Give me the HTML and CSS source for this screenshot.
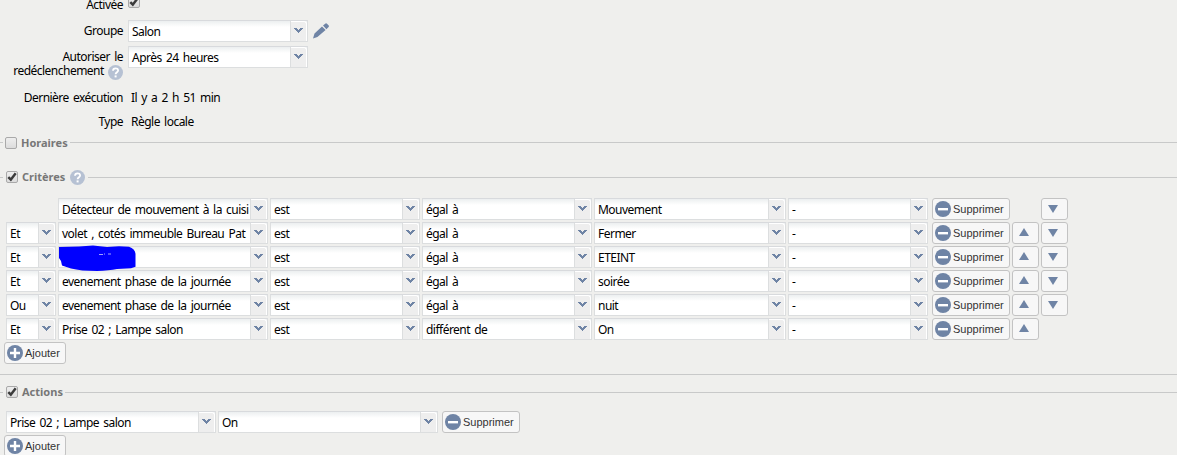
FILE: index.html
```
<!DOCTYPE html>
<html lang="fr">
<head>
<meta charset="utf-8">
	<title>Règle</title>
	<link rel="stylesheet" href="styles.css">
</head>
<body>
<svg class="defs">
	<symbol id="chevron" viewBox="0 0 9 6"><path d="M0 0h3v1h1v1h1v-1h1v-1h3v1h-1v1h-1v1h-1v1h-1v1h-1v-1h-1v-1h-1v-1h-1v-1h-1z"/></symbol>
	<symbol id="minus" viewBox="0 0 16 16"><circle cx="8" cy="8" r="8"/><path fill="#fff" d="M3 7h10v2.4H3z"/></symbol>
	<symbol id="plus" viewBox="0 0 16 16"><circle cx="8" cy="8" r="8"/><path fill="#fff" d="M3 6.8h3.8V3h2.4v3.8H13v2.4H9.2V13H6.8V9.2H3z"/></symbol>
	<symbol id="up" viewBox="0 0 10 8"><path d="M5 0l5 8H0z"/></symbol>
	<symbol id="down" viewBox="0 0 10 8"><path d="M0 0h10L5 8z"/></symbol>
	<symbol id="check" viewBox="0 0 12 12"><path fill="none" stroke="#3b3b3b" stroke-width="2.5" d="M2.3 6.2l2.5 2.5L9.7 2.2"/></symbol>
	<symbol id="help" viewBox="0 0 15 15"><circle cx="7.5" cy="7.5" r="7.5" fill="#b6c1d3"/><path fill="none" stroke="#fff" stroke-width="1.8" d="M5 5.7c0-3.2 5.1-3.1 5.1-.3 0 1.8-2.5 1.8-2.5 3.9"/><path fill="#fff" d="M6.6 10.4h2v2h-2z"/></symbol>
</svg>
<div class="form">
	<div class="line active">
		<label>Activée</label>
		<span class="check"><svg><use href="#check"/></svg></span>
	</div>
	<div class="line group">
		<label>Groupe</label>
		<div class="combo"><span>Salon</span><i><svg><use href="#chevron"/></svg></i></div>
		<svg class="pencil" viewBox="0 0 16 16"><path d="M0 15.5l1.5-5L9 3.4l3.6 3.7-8.2 7zM10 2.6L12.5.6q.8-.6 1.5.1l1.7 1.8q.6.8-.1 1.4l-2.2 2.3z"/></svg>
	</div>
	<div class="line retrigger">
		<label>Autoriser le<br>redéclenchement <svg class="help"><use href="#help"/></svg></label>
		<div class="combo"><span>Après 24 heures</span><i><svg><use href="#chevron"/></svg></i></div>
	</div>
	<div class="line last-run"><label>Dernière exécution</label><span class="value">Il y a 2 h 51 min</span></div>
	<div class="line type"><label>Type</label><span class="value">Règle locale</span></div>
</div>

<div class="legend hours">
	<span class="check"></span>
	<b>Horaires</b>
</div>

<div class="legend criteria-title">
	<span class="check"><svg><use href="#check"/></svg></span>
	<b>Critères</b>
	<svg class="help"><use href="#help"/></svg>
</div>
<div class="criteria">
	<div class="row">
		<span></span>
		<div class="combo"><span>Détecteur de mouvement à la cuisi</span><i><svg><use href="#chevron"/></svg></i></div>
		<div class="combo"><span>est</span><i><svg><use href="#chevron"/></svg></i></div>
		<div class="combo"><span>égal à</span><i><svg><use href="#chevron"/></svg></i></div>
		<div class="combo"><span>Mouvement</span><i><svg><use href="#chevron"/></svg></i></div>
		<div class="combo"><span>-</span><i><svg><use href="#chevron"/></svg></i></div>
		<button class="remove"><svg><use href="#minus"/></svg>Supprimer</button>
		<span></span>
		<button class="move"><svg><use href="#down"/></svg></button>
	</div>
	<div class="row">
		<div class="combo"><span>Et</span><i><svg><use href="#chevron"/></svg></i></div>
		<div class="combo"><span>volet , cotés immeuble Bureau Pat</span><i><svg><use href="#chevron"/></svg></i></div>
		<div class="combo"><span>est</span><i><svg><use href="#chevron"/></svg></i></div>
		<div class="combo"><span>égal à</span><i><svg><use href="#chevron"/></svg></i></div>
		<div class="combo"><span>Fermer</span><i><svg><use href="#chevron"/></svg></i></div>
		<div class="combo"><span>-</span><i><svg><use href="#chevron"/></svg></i></div>
		<button class="remove"><svg><use href="#minus"/></svg>Supprimer</button>
		<button class="move up"><svg><use href="#up"/></svg></button>
		<button class="move"><svg><use href="#down"/></svg></button>
	</div>
	<div class="row">
		<div class="combo"><span>Et</span><i><svg><use href="#chevron"/></svg></i></div>
		<div class="combo masked"><span></span><i><svg><use href="#chevron"/></svg></i>
			<svg class="scribble" viewBox="0 0 78 27"><path d="M0 2L20 1.5 34 .5 48 2l12-.8 10 .6q6 2 6.500 7v13l-4.500 1.5-14 .8q-8 1.7-20 1.8-16 0-26-2.500L3 20.500 2 16 0 13z"/><path fill="none" stroke="#c9ccff" stroke-width=".8" d="M40 9.500h4m1-.5h1m3 0h3"/></svg>
		</div>
		<div class="combo"><span>est</span><i><svg><use href="#chevron"/></svg></i></div>
		<div class="combo"><span>égal à</span><i><svg><use href="#chevron"/></svg></i></div>
		<div class="combo"><span>ETEINT</span><i><svg><use href="#chevron"/></svg></i></div>
		<div class="combo"><span>-</span><i><svg><use href="#chevron"/></svg></i></div>
		<button class="remove"><svg><use href="#minus"/></svg>Supprimer</button>
		<button class="move up"><svg><use href="#up"/></svg></button>
		<button class="move"><svg><use href="#down"/></svg></button>
	</div>
	<div class="row">
		<div class="combo"><span>Et</span><i><svg><use href="#chevron"/></svg></i></div>
		<div class="combo"><span>evenement phase de la journée</span><i><svg><use href="#chevron"/></svg></i></div>
		<div class="combo"><span>est</span><i><svg><use href="#chevron"/></svg></i></div>
		<div class="combo"><span>égal à</span><i><svg><use href="#chevron"/></svg></i></div>
		<div class="combo"><span>soirée</span><i><svg><use href="#chevron"/></svg></i></div>
		<div class="combo"><span>-</span><i><svg><use href="#chevron"/></svg></i></div>
		<button class="remove"><svg><use href="#minus"/></svg>Supprimer</button>
		<button class="move up"><svg><use href="#up"/></svg></button>
		<button class="move"><svg><use href="#down"/></svg></button>
	</div>
	<div class="row">
		<div class="combo"><span>Ou</span><i><svg><use href="#chevron"/></svg></i></div>
		<div class="combo"><span>evenement phase de la journée</span><i><svg><use href="#chevron"/></svg></i></div>
		<div class="combo"><span>est</span><i><svg><use href="#chevron"/></svg></i></div>
		<div class="combo"><span>égal à</span><i><svg><use href="#chevron"/></svg></i></div>
		<div class="combo"><span>nuit</span><i><svg><use href="#chevron"/></svg></i></div>
		<div class="combo"><span>-</span><i><svg><use href="#chevron"/></svg></i></div>
		<button class="remove"><svg><use href="#minus"/></svg>Supprimer</button>
		<button class="move up"><svg><use href="#up"/></svg></button>
		<button class="move"><svg><use href="#down"/></svg></button>
	</div>
	<div class="row">
		<div class="combo"><span>Et</span><i><svg><use href="#chevron"/></svg></i></div>
		<div class="combo"><span>Prise 02 ; Lampe salon</span><i><svg><use href="#chevron"/></svg></i></div>
		<div class="combo"><span>est</span><i><svg><use href="#chevron"/></svg></i></div>
		<div class="combo"><span>différent de</span><i><svg><use href="#chevron"/></svg></i></div>
		<div class="combo"><span>On</span><i><svg><use href="#chevron"/></svg></i></div>
		<div class="combo"><span>-</span><i><svg><use href="#chevron"/></svg></i></div>
		<button class="remove"><svg><use href="#minus"/></svg>Supprimer</button>
		<button class="move up"><svg><use href="#up"/></svg></button>
	</div>
	<button class="add"><svg><use href="#plus"/></svg>Ajouter</button>
</div>

<div class="legend actions-title">
	<span class="check"><svg><use href="#check"/></svg></span>
	<b>Actions</b>
</div>
<div class="actions">
	<div class="row">
		<div class="combo"><span>Prise 02 ; Lampe salon</span><i><svg><use href="#chevron"/></svg></i></div>
		<div class="combo"><span>On</span><i><svg><use href="#chevron"/></svg></i></div>
		<button class="remove"><svg><use href="#minus"/></svg>Supprimer</button>
	</div>
	<button class="add"><svg><use href="#plus"/></svg>Ajouter</button>
</div>
</body>
</html>
```
FILE: styles.css
```
*{
	box-sizing: border-box;
}
html,body{
	height: 455px;
	margin: 0;
	overflow: hidden;
}
body{
	background: #efefed;
	color: #000;
	font: 12px/14px "Noto Sans", sans-serif;
	letter-spacing: -.52px;
	word-spacing: 1.6px;
}
svg{
	display: block;
	flex: none;
	fill: #6f84a5;
}
.defs{
	display: none;
}
.form{
	height: 134px;
}
.line{
	display: flex;
	align-items: flex-start;
}
.line label{
	width: 123px;
	margin-right: 5px;
	text-align: right;
	white-space: nowrap;
}
.active{
	height: 20px;
}
.active label{
	margin-top: -2px;
}
.active .check{
	margin-top: -4px;
}
.group{
	height: 26px;
}
.group label,.retrigger label{
	padding-top: 4px;
}
.retrigger{
	height: 45px;
}
.last-run{
	height: 24px;
}
.value{
	margin-left: 3px;
}
.line .combo{
	width: 180px;
}
.pencil{
	width: 16px;
	height: 16px;
	margin: 3px 0 0 5px;
}
.help{
	width: 15px;
	height: 15px;
}
label .help{
	display: inline-block;
	vertical-align: top;
	margin: 1px 0 0;
}
.check{
	flex: none;
	width: 12px;
	height: 12px;
	border: 1px solid #a9a9a9;
	border-radius: 2px;
	background: linear-gradient(#eee,#dcdcdc);
}
.check svg{
	width: 12px;
	height: 12px;
	margin: -1px;
}
.combo{
	position: relative;
	display: flex;
	height: 22px;
	border: 1px solid #dcdedf;
	border-top-color: #d8dadd;
	background: linear-gradient(#eceff0,#fff 6px);
	white-space: nowrap;
}
.combo span{
	flex: 1;
	min-width: 0;
	overflow: hidden;
	padding: 4px 0 0 3px;
}
.combo i{
	width: 16px;
	border: solid #fff;
	border-width: 1px 1px 0 0;
	border-radius: 0 3px 0 0;
	background: #eee;
	box-shadow: -1px 0 #dcdedf;
}
.combo i svg{
	width: 9px;
	height: 6px;
	margin: 6px 0 0 3px;
}
.legend{
	display: flex;
	align-items: center;
	height: 16px;
	color: #777;
	font-size: 11px;
	letter-spacing: 0;
}
.legend:before,.legend:after{
	content: "";
	width: 3px;
	height: 1px;
	background: #c8c9c9;
}
.legend:after{
	flex: 1;
	margin-left: 2px;
}
.legend .check{
	margin: 0 4px 0 3px;
}
.legend .help{
	margin: 1px 1px 0 5px;
}
.hours{
	height: 17px;
}
.hours .check{
	margin-left: 2px;
}
.criteria-title{
	margin-top: 18px;
}
.criteria{
	height: 190px;
	padding: 13px 4px 0;
	border-bottom: 1px solid #c8c9c9;
}
.row{
	display: grid;
	gap: 2px;
	height: 24px;
	padding-left: 2px;
	align-items: start;
}
.criteria .row{
	grid-template-columns: 50px 210px 150px 170px 192px 140px 80px 27px 27px;
}
.actions .row{
	grid-template-columns: 210px 220px 80px;
}
button{
	display: flex;
	align-items: center;
	height: 22px;
	padding: 0 0 0 2px;
	border: 1px solid #c3c3c3;
	border-radius: 3px;
	background: #f7f7f7;
	color: #333;
	font: 11px/14px "Liberation Sans", Arial, sans-serif;
}
button svg{
	width: 16px;
	height: 16px;
	margin-right: 2px;
}
.remove{
	width: 78px;
	margin-left: 2px;
}
.move{
	width: 27px;
}
.move svg{
	width: 10px;
	height: 8px;
	margin: 0 0 0 4px;
}
.up svg{
	margin-bottom: 2px;
}
.add{
	width: 62px;
}
.scribble{
	position: absolute;
	left: 0;
	top: -2px;
	width: 78px;
	height: 27px;
	fill: #00f;
	z-index: 1;
}
.actions-title{
	margin-top: 9px;
}
.actions{
	padding: 11px 4px 0;
}
```
